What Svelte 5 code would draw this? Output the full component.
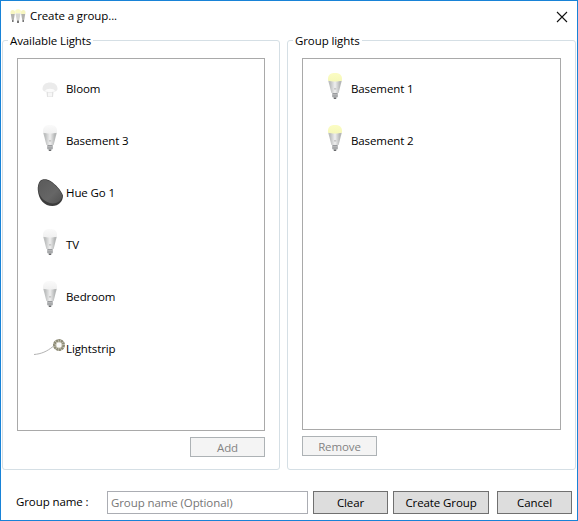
<script>
  const available = [
    { name: 'Bloom', kind: 'bloom' },
    { name: 'Basement 3', kind: 'off' },
    { name: 'Hue Go 1', kind: 'go' },
    { name: 'TV', kind: 'off' },
    { name: 'Bedroom', kind: 'off' },
    { name: 'Lightstrip', kind: 'strip' }
  ];
  const grouped = [
    { name: 'Basement 1', kind: 'on' },
    { name: 'Basement 2', kind: 'on' }
  ];
</script>

{#snippet bulb(cap)}
  <path d="M5.2 8.5 L18.8 8.5 L15.6 21 L8.4 21 Z" fill="url(#body)" />
  <path d="M5 8.8 C4.6 3.5 6.5 1 12 1 C17.5 1 19.4 3.5 19 8.8 C15 9.8 9 9.8 5 8.8 Z" fill={cap} />
  <rect x="9.2" y="21" width="5.6" height="4.4" rx=".8" fill="#95979a" />
  <path d="M9.2 22.4H14.8M9.2 24H14.8" stroke="#d4d4d4" stroke-width=".6" />
  <rect x="10.6" y="25.4" width="2.8" height="1.6" rx=".8" fill="#66676a" />
  <rect x="11" y="16.5" width="2.2" height=".8" fill="#a8a8a8" />
{/snippet}

{#snippet icon(kind)}
  <svg class="icon" width="24" height="32" viewBox="0 0 24 32" aria-hidden="true">
    {#if kind === 'off'}
      {@render bulb('url(#capOff)')}
    {:else if kind === 'on'}
      {@render bulb('url(#capOn)')}
    {:else if kind === 'bloom'}
      <path d="M4.5 17 C4.5 12.5 8 10.5 12 10.5 C16 10.5 19.5 12.5 19.5 17 C19.5 19.5 16 20 12 20 C8 20 4.5 19.5 4.5 17 Z" fill="#ebebeb" />
      <path d="M7 19 C8 16 16 16 17 19 C15 20.3 9 20.3 7 19Z" fill="#fbfbfb" />
      <path d="M8.5 20 H15.5 L15 25 H9 Z" fill="#e2e2e2" />
      <path d="M10 20.5H14V24.5H10Z" fill="#f7f7f7" />
    {:else if kind === 'go'}
      <path d="M2 5 C4 2.8 9 2.8 12.5 5 C17.5 8.3 23 14 25 19.5 C25 25.5 20.5 30 14.5 30 C6.5 30 0.6 24 -0.2 14 C-0.5 10.5 0.4 7 2 5 Z" fill="#3c3c3c" />
      <path d="M2.4 5.4 C4.4 3.4 9 3.4 12.2 5.5 C17 8.7 22.3 14 24.4 19.6 C24 24 20 27.6 14.5 27.4 C7 27 1.3 21 .4 14 C0 10.5 1 7 2.4 5.4 Z" fill="url(#goFace)" />
    {:else}
      <path d="M-4 22.5 C3 22 9 19.5 15 14.5" fill="none" stroke="#a9a9a9" stroke-width=".9" />
      <circle cx="21" cy="13" r="4.5" fill="none" stroke="#8f8d78" stroke-width="3" stroke-dasharray="2.2 .3" />
      <circle cx="21" cy="13" r="3" fill="none" stroke="#cfcdbd" stroke-width="1" />
      <circle cx="21" cy="13" r="2.2" fill="#fafafa" />
    {/if}
  </svg>
{/snippet}

{#snippet row(light)}
  <li class="row">
    {@render icon(light.kind)}
    <span>{light.name}</span>
  </li>
{/snippet}

<svg class="defs" width="0" height="0" aria-hidden="true">
  <defs>
    <linearGradient id="body" x1="0" x2="1" y1="0" y2="0">
      <stop offset="0.15" stop-color="#bdbfbf" />
      <stop offset=".5" stop-color="#efefef" />
      <stop offset=".85" stop-color="#b5b7b7" />
    </linearGradient>
    <linearGradient id="capOff" x1="0" x2="0" y1="0" y2="1">
      <stop offset="0" stop-color="#fafafa" />
      <stop offset="1" stop-color="#f0f0f0" />
    </linearGradient>
    <linearGradient id="capOn" x1="0" x2="0" y1="0" y2="1">
      <stop offset="0" stop-color="#fbfcc4" />
      <stop offset="1" stop-color="#f6f8b8" />
    </linearGradient>
    <linearGradient id="goFace" x1="0" x2="1" y1="0" y2="1">
      <stop offset="0" stop-color="#5a5a5a" />
      <stop offset=".6" stop-color="#666666" />
      <stop offset="1" stop-color="#505050" />
    </linearGradient>
  </defs>
</svg>

<div class="window">
  <header class="title">
    <svg class="logo" width="16" height="16" viewBox="0 0 16 16" aria-hidden="true">
      <path d="M0.5 4 C0.5 1.2 5 1.2 5 4 V6 H.5Z" fill="#f7f6c0" />
      <path d="M.8 6H4.8L3.8 12H1.8Z" fill="#b3b3ae" />
      <path d="M11 4 C11 1.2 15.5 1.2 15.5 4 V6 H11Z" fill="#f7f6c0" />
      <path d="M11.2 6H15.2L14.2 12H12.2Z" fill="#b3b3ae" />
      <path d="M5.2 3 C5.2 0.8 10.8 0.8 10.8 3 V5.5 H5.2Z" fill="#fafac8" />
      <path d="M5.5 5.5H10.5L9.2 12.5H6.8Z" fill="#d6d6d2" />
      <rect x="7" y="12.5" width="2" height="2.5" fill="#777" />
      <rect x="2" y="12" width="1.6" height="2" fill="#777" />
      <rect x="12.4" y="12" width="1.6" height="2" fill="#777" />
    </svg>
    <span class="title-text">Create a group...</span>
    <svg class="close" width="12" height="12" viewBox="0 0 12 12" aria-hidden="true">
      <path d="M1 1L11 11M11 1L1 11" stroke="#111" stroke-width="1.1" fill="none" />
    </svg>
  </header>

  <main class="groups">
    <fieldset class="group left">
      <legend>Available Lights</legend>
      <div class="group-body">
        <ul class="list">
          {#each available as light}
            {@render row(light)}
          {/each}
        </ul>
        <div class="actions end">
          <button class="small" disabled>Add</button>
        </div>
      </div>
    </fieldset>

    <fieldset class="group right">
      <legend>Group lights</legend>
      <div class="group-body">
        <ul class="list">
          {#each grouped as light}
            {@render row(light)}
          {/each}
        </ul>
        <div class="actions">
          <button class="small" disabled>Remove</button>
        </div>
      </div>
    </fieldset>
  </main>

  <footer class="footer">
    <label class="name-label" for="group-name">Group name :</label>
    <input id="group-name" class="name-input" placeholder="Group name (Optional)" />
    <button class="big clear">Clear</button>
    <button class="big create">Create Group</button>
    <button class="big cancel">Cancel</button>
  </footer>
</div>

<style>
  :global(body) {
    margin: 0;
    background: #fff;
  }
  .defs {
    position: absolute;
  }
  .window {
    box-sizing: border-box;
    width: 578px;
    height: 521px;
    border: 1px solid #1883d7;
    background: #fff;
    display: flex;
    flex-direction: column;
    font-family: "Open Sans", "Noto Sans", sans-serif;
    font-size: 11.5px;
    letter-spacing: -0.1px;
    color: #000;
  }
  .title {
    height: 31px;
    display: flex;
    align-items: center;
    padding: 0 10px 2px 9px;
    box-sizing: border-box;
    flex: none;
  }
  .logo {
    margin-right: 4px;
  }
  .title-text {
    flex: 1;
  }
  .close {
    margin-right: -1px;
    margin-top: 2px;
  }
  .groups {
    display: flex;
    gap: 7px;
    padding: 0 1px;
    height: 438px;
    flex: none;
  }
  .group {
    box-sizing: border-box;
    margin: 0;
    padding: 0 14px;
    border: 1px solid #d5dfe5;
    border-radius: 3px;
    min-width: 0;
    height: 100%;
    display: flex;
    flex-direction: column;
  }
  .left {
    width: 278px;
    padding-bottom: 12px;
  }
  .right {
    width: 289px;
    padding-bottom: 13px;
  }
  legend {
    margin-left: -9px;
    padding: 0 2px;
    line-height: 16px;
    transform: translateY(1px);
  }
  .group-body {
    flex: 1;
    min-height: 0;
    display: flex;
    flex-direction: column;
    padding-top: 10px;
    box-sizing: border-box;
  }
  .list {
    list-style: none;
    margin: 0;
    padding: 3px 0 0 20px;
    border: 1px solid #a9a9a9;
    flex: 1;
    min-height: 0;
  }
  .row {
    height: 52px;
    display: flex;
    align-items: center;
    gap: 4px;
  }
  .icon {
    overflow: visible;
    flex: none;
  }
  .actions {
    display: flex;
    margin-top: 6px;
  }
  .end {
    justify-content: flex-end;
  }
  button {
    font: inherit;
    letter-spacing: inherit;
    margin: 0;
    padding: 0;
    border-radius: 0;
    box-sizing: border-box;
  }
  .small {
    width: 75px;
    height: 20px;
    background: #f4f4f4;
    border: 1px solid #adb2b5;
    color: #838383;
  }
  .footer {
    display: flex;
    align-items: center;
    padding: 21px 0 0 15px;
    flex: none;
  }
  .name-label {
    width: 91px;
    flex: none;
    position: relative;
    top: -1px;
  }
  .name-input {
    box-sizing: border-box;
    width: 201px;
    height: 23px;
    padding: 0 3px;
    margin: 0 5px 0 0;
    border: 1px solid #abadb3;
    border-radius: 0;
    font: inherit;
    letter-spacing: inherit;
    outline: none;
  }
  .name-input::placeholder {
    color: #767676;
    opacity: 1;
  }
  .big {
    height: 23px;
    background: #dddddd;
    border: 1px solid #707070;
    color: #000;
    width: 75px;
  }
  .clear {
    margin-right: 5px;
  }
  .create {
    width: 96px;
    margin-right: 8px;
  }
</style>
